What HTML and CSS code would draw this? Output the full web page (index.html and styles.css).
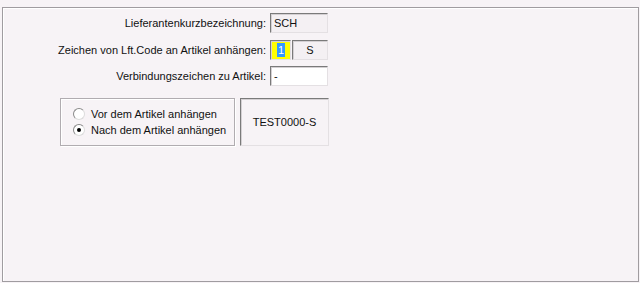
FILE: index.html
```html
<!DOCTYPE html>
<html lang="de">
<head>
<meta charset="utf-8">
<link rel="stylesheet" href="styles.css">
</head>
<body>
<div class="frame">
  <div class="row row1">
    <label class="lbl">Lieferantenkurzbezeichnung:</label>
    <div class="field readonly wide">SCH</div>
  </div>
  <div class="row row2">
    <label class="lbl">Zeichen von Lft.Code an Artikel anhängen:</label>
    <div class="field yellow"><span class="sel">1</span></div>
    <div class="field readonly small center">S</div>
  </div>
  <div class="row row3">
    <label class="lbl">Verbindungszeichen zu Artikel:</label>
    <div class="field white wide">-</div>
  </div>
  <div class="bottom">
    <div class="group">
      <div class="radio"><span class="circle"></span><span>Vor dem Artikel anhängen</span></div>
      <div class="radio"><span class="circle checked"></span><span>Nach dem Artikel anhängen</span></div>
    </div>
    <div class="preview">TEST0000-S</div>
  </div>
</div>
</body>
</html>
```
FILE: styles.css
```css
html, body {
  margin: 0;
  padding: 0;
  background: #f7f3f6;
  font-family: "Liberation Sans", Arial, sans-serif;
  font-size: 11px;
  color: #111;
}
.frame {
  box-sizing: border-box;
  margin: 7px 1px 0 2px;
  width: 637px;
  height: 275px;
  border: 1px solid #a09ca0;
  box-shadow: inset 1px 1px 0 #ffffff;
  padding-top: 5px;
}
.row {
  display: flex;
  align-items: center;
  height: 20px;
}
.row2 { margin-top: 7px; }
.row3 { margin-top: 6px; }
.lbl {
  box-sizing: border-box;
  width: 264px;
  text-align: right;
  padding-right: 1px;
  margin-right: 3px;
  white-space: nowrap;
}
.field {
  box-sizing: border-box;
  height: 20px;
  border: 1px solid;
  border-color: #7a7a7a #e4e0e3 #e4e0e3 #7a7a7a;
  box-shadow: inset 1px 1px 0 #d4d0d3;
  padding: 2px 0 0 3px;
  line-height: 14px;
  white-space: nowrap;
}
.readonly { background: #f4f0f3; }
.white { background: #ffffff; }
.wide { width: 58px; }
.yellow {
  width: 21px;
  background: #ffff00;
  margin-right: 1px;
  padding-left: 6px;
}
.sel {
  display: inline-block;
  background: #3399ff;
  color: #fff;
  padding: 0 1px;
  line-height: 14px;
}
.small { width: 36px; }
.center { text-align: center; padding-left: 0; }
.bottom {
  display: flex;
  margin-top: 12px;
  margin-left: 57px;
  gap: 5px;
}
.group {
  box-sizing: border-box;
  width: 175px;
  height: 48px;
  border: 1px solid #b0acb0;
  box-shadow: inset 1px 1px 0 #ffffff, 1px 1px 0 #ffffff;
  padding: 8px 0 0 12px;
  display: flex;
  flex-direction: column;
  gap: 3px;
}
.radio {
  display: flex;
  align-items: center;
  height: 13px;
  gap: 6px;
}
.circle {
  box-sizing: border-box;
  width: 12px;
  height: 12px;
  border-radius: 50%;
  border: 1px solid;
  border-color: #8a8a8a #dcdcdc #dcdcdc #8a8a8a;
  background: #ffffff;
  position: relative;
}
.circle.checked::after {
  content: "";
  position: absolute;
  left: 3px;
  top: 3px;
  width: 4px;
  height: 4px;
  border-radius: 50%;
  background: #000;
}
.preview {
  box-sizing: border-box;
  width: 89px;
  height: 48px;
  border: 1px solid;
  border-color: #7a7a7a #e4e0e3 #e4e0e3 #7a7a7a;
  box-shadow: inset 1px 1px 0 #d4d0d3;
  display: flex;
  align-items: center;
  justify-content: center;
  padding-bottom: 1px;
}
```
